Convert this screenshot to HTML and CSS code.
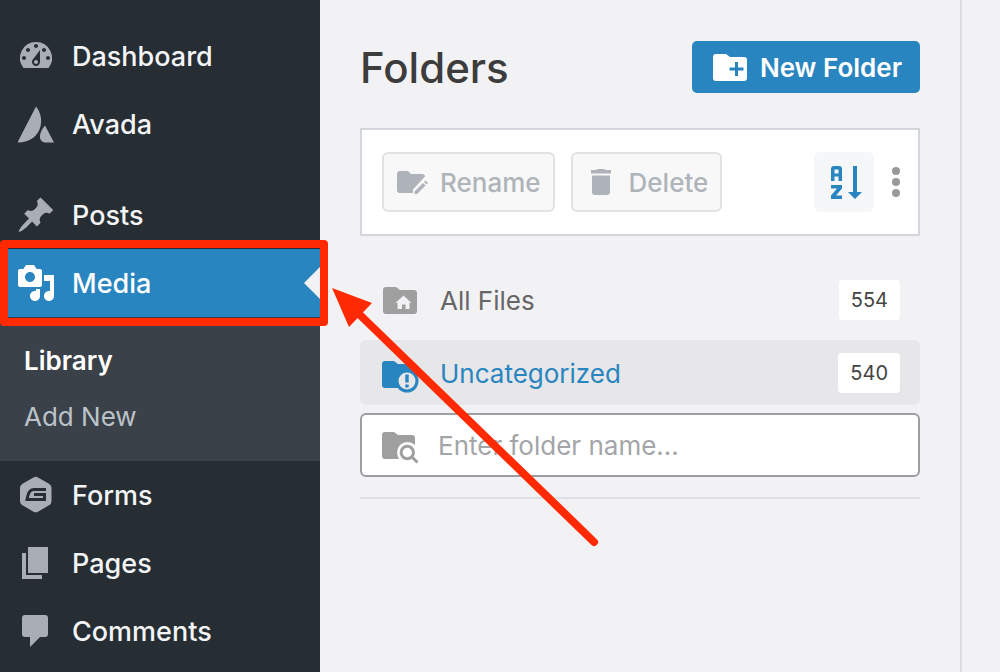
FILE: index.html
```html
<!DOCTYPE html>
<html lang="en">
<head>
<meta charset="utf-8">
<title>Media Library</title>
<link rel="stylesheet" href="styles.css">
</head>
<body>
<div class="app">
  <nav class="sidebar" aria-label="Admin menu">
    <ul class="menu">
      <li class="menu-item"><a class="menu-link" href="#dashboard">
        <svg class="icon" viewBox="0 0 20 20" aria-hidden="true"><path fill-rule="evenodd" d="M3.76 16h12.48A7.998 7.998 0 0 0 10 3a7.998 7.998 0 0 0-6.24 13zM10 4c.55 0 1 .45 1 1s-.45 1-1 1-1-.45-1-1 .45-1 1-1zM6 6c.55 0 1 .45 1 1s-.45 1-1 1-1-.45-1-1 .45-1 1-1zm8 0c.55 0 1 .45 1 1s-.45 1-1 1-1-.45-1-1 .45-1 1-1zm-5.37 5.55L12 7v6c0 1.1-.9 2-2 2s-2-.9-2-2c0-.57.24-1.08.63-1.45zM4 10c.55 0 1 .45 1 1s-.45 1-1 1-1-.45-1-1 .45-1 1-1zm12 0c.55 0 1 .45 1 1s-.45 1-1 1-1-.45-1-1 .45-1 1-1zm-5 3c0-.55-.45-1-1-1s-1 .45-1 1 .45 1 1 1 1-.45 1-1z"/></svg>
        <span class="label">Dashboard</span></a></li>
      <li class="menu-item"><a class="menu-link" href="#avada">
        <svg class="icon" viewBox="0 0 40 40" aria-hidden="true"><path d="M20 2.500C24.500 8 27 17 23.500 25.500C20 33.500 12 38.500 2.500 38.500Q1.500 38.500 2.200 37Z"/><path d="M29 21.500L38 38.500H28.500C25 37.500 23.500 35 24 31.500C24.500 28 26 25 29 21.500Z"/></svg>
        <span class="label">Avada</span></a></li>
      <li class="menu-gap" aria-hidden="true"></li>
      <li class="menu-item"><a class="menu-link" href="#posts">
        <svg class="icon" viewBox="0 0 20 20" aria-hidden="true"><path d="M10.440 3.020l1.820-1.820 6.360 6.350-1.830 1.820c-1.050-.68-2.480-.57-3.410.36l-.75.75c-.92.93-1.040 2.350-.35 3.410l-1.830 1.820-2.410-2.410-2.800 2.790c-.42.42-3.380 2.710-3.800 2.290s1.860-3.390 2.280-3.810l2.790-2.790L4.100 9.360l1.830-1.820c1.050.69 2.480.57 3.400-.36l.75-.75c.93-.92 1.050-2.350.36-3.410z"/></svg>
        <span class="label">Posts</span></a></li>
      <li class="menu-item current"><a class="menu-link" href="#media" aria-current="page">
        <svg class="icon" viewBox="0 0 20 20" aria-hidden="true"><path fill-rule="evenodd" d="M13 11V4c0-.55-.45-1-1-1h-1.670L9 1H5L3.670 3H2c-.55 0-1 .45-1 1v7c0 .55.45 1 1 1h10c.55 0 1-.45 1-1zM7 4.500c1.380 0 2.500 1.120 2.500 2.500S8.380 9.500 7 9.500 4.500 8.380 4.500 7 5.620 4.500 7 4.500zM14 6h5v10.500c0 1.380-1.120 2.500-2.500 2.500S14 17.880 14 16.500s1.120-2.500 2.500-2.500c.17 0 .34.02.5.05V9h-3V6zm-4 8.050V13h2v3.500c0 1.380-1.120 2.500-2.500 2.500S7 17.880 7 16.500 8.120 14 9.500 14c.17 0 .34.02.5.05z"/></svg>
        <span class="label">Media</span></a></li>
    </ul>
    <ul class="submenu">
      <li><a class="submenu-link active" href="#library">Library</a></li>
      <li><a class="submenu-link" href="#add-new">Add New</a></li>
    </ul>
    <ul class="menu">
      <li class="menu-item"><a class="menu-link" href="#forms">
        <svg class="icon" viewBox="0 0 40 40" aria-hidden="true"><path d="M17.500 2.500Q19.700 1.200 22 2.500L33 8.700Q35.500 10.200 35.500 12.800V26.200Q35.500 28.800 33 30.300L22 36.700Q19.700 38 17.500 36.700L6.500 30.300Q4 28.800 4 26.200V12.800Q4 10.200 6.500 8.700Z"/><path class="forms-mark" d="M30 14.500H17.500C13.500 14.500 12 18 11 24.500H28.500V19.500H18"/></svg>
        <span class="label">Forms</span></a></li>
      <li class="menu-item"><a class="menu-link" href="#pages">
        <svg class="icon" viewBox="0 0 20 20" aria-hidden="true"><path d="M6 15V2h10v13H6zm-1 1h8v2H3V5h2v11z"/></svg>
        <span class="label">Pages</span></a></li>
      <li class="menu-item"><a class="menu-link" href="#comments">
        <svg class="icon" viewBox="0 0 20 20" aria-hidden="true"><path d="M4.500 2h10A1.500 1.500 0 0 1 16 3.500v8a1.500 1.500 0 0 1-1.500 1.500H12l-5 5v-5H4.500A1.500 1.500 0 0 1 3 11.500v-8A1.500 1.500 0 0 1 4.500 2z"/></svg>
        <span class="label">Comments</span></a></li>
    </ul>
  </nav>

  <main class="panel">
    <header class="panel-head">
      <h1 class="title">Folders</h1>
      <button class="new-folder" type="button">
        <svg class="icon" viewBox="0 0 40 40" aria-hidden="true"><path d="M6 7H16L20 10H34Q37 10 37 13V31Q37 34 34 34H6Q3 34 3 31V10Q3 7 6 7Z"/><path class="plus" d="M26.500 15V29M19.500 22H33.500"/></svg>
        <span class="label">New Folder</span></button>
    </header>

    <div class="toolbar">
      <button class="tool" type="button" disabled>
        <svg class="icon-sm" viewBox="0 0 32 32" aria-hidden="true"><path d="M4 5H12L15 8H26Q29 8 29 10.500L17 23.500V27H4Q1 27 1 24V8Q1 5 4 5Z"/><path d="M18.500 25.500L27 17L29.500 19.500L21 28H18.500ZM28 16L29.500 14.500L32 17L30.500 18.500Z"/></svg>
        <span class="label">Rename</span></button>
      <button class="tool" type="button" disabled>
        <svg class="icon-sm" viewBox="0 0 32 32" aria-hidden="true"><path d="M6 4H11L13 3H19L21 4H26V7.500H6ZM7 9.500H25V26Q25 29 22 29H10Q7 29 7 26Z"/></svg>
        <span class="label">Delete</span></button>
      <button class="sort" type="button" aria-label="Sort folders">
        <svg class="sort-icon" viewBox="0 0 36 36" aria-hidden="true"><path fill-rule="evenodd" d="M5 17V5Q5 2 8 2H13Q16 2 16 5V17H12.500V12.500H8.500V17ZM8.500 5.500V9.500H12.500V5.500Z"/><path d="M5 21H16V24.500L10 31.500H16V35H5V31.500L11 24.500H5Z"/><path d="M27 2H31V28H36L29 35L22 28H27Z"/></svg>
      </button>
      <button class="more" type="button" aria-label="More options">
        <svg class="more-icon" viewBox="0 0 8 32" aria-hidden="true"><circle cx="4" cy="5" r="4"/><circle cx="4" cy="16" r="4"/><circle cx="4" cy="27" r="4"/></svg>
      </button>
    </div>

    <div class="folders">
      <a class="folder" href="#all">
        <svg class="icon" viewBox="0 0 40 40" aria-hidden="true"><path d="M6 7H16L20 10H34Q37 10 37 13V31Q37 34 34 34H6Q3 34 3 31V10Q3 7 6 7Z"/><path class="house" d="M23.500 15.500L31.500 23H29.500V29H25.500V24.500H22V29H17.500V23H15.500Z"/></svg>
        <span class="folder-name label">All Files</span><span class="count">554</span></a>
      <a class="folder selected" href="#uncategorized">
        <svg class="icon" viewBox="0 0 40 40" aria-hidden="true"><path d="M5 8H14L18 11H32Q35 11 35 14V32Q35 35 32 35H5Q2 35 2 32V11Q2 8 5 8Z"/><circle cx="27" cy="28" r="11.500"/><circle class="alert-face" cx="27" cy="28" r="8.500"/><path d="M25.300 21.500H28.700V29.500H25.300ZM25.300 31.500H28.700V34.500H25.300Z"/></svg>
        <span class="folder-name label">Uncategorized</span><span class="count">540</span></a>
      <label class="search">
        <svg class="icon" viewBox="0 0 40 40" aria-hidden="true"><path d="M5 7H14L18 10H32Q35 10 35 13V31Q35 34 32 34H5Q2 34 2 31V10Q2 7 5 7Z"/><circle class="lens-gap" cx="27.500" cy="27.500" r="10.500"/><path class="lens-gap" d="M34 25H40V34H34Z"/><path class="lens" d="M33.500 27.500A6.200 6.200 0 1 1 21.100 27.500A6.200 6.200 0 1 1 33.500 27.500M32 32L37.500 37.500"/></svg>
        <input class="search-input" type="text" placeholder="Enter folder name..." aria-label="Folder name">
      </label>
    </div>
    <hr class="rule">
  </main>
</div>
<svg class="arrow" viewBox="0 0 280 270" aria-hidden="true"><path class="arrow-line" d="M264 252L28 23"/><path d="M2 -2L42 13L19 37Z"/></svg>
</body>
</html>
```
FILE: styles.css
```css
* { box-sizing: border-box; }

body {
  margin: 0;
  position: relative;
  background: #f2f2f4;
  font-family: Inter, "Liberation Sans", sans-serif;
  font-size: 26px;
  line-height: 32px;
  color: #444;
}

ul { list-style: none; margin: 0; padding: 0; }
a { color: inherit; text-decoration: none; }
button { font: inherit; cursor: pointer; }

.app {
  display: grid;
  grid-template-columns: 320px 1fr 38px;
  min-height: 100vh;
}

.icon { width: 40px; height: 40px; flex: none; fill: currentColor; }
.label { padding-top: 2px; }

/* Sidebar */
.sidebar { background: #262e34; padding-top: 22px; }
.menu-link {
  display: flex;
  align-items: center;
  gap: 16px;
  height: 68px;
  padding: 0 16px;
  color: #f3f4f6;
  font-size: 27px;
  font-weight: 500;
}
.menu-link .icon { color: #a9aeb4; }
.menu-gap { height: 23px; }
.current { position: relative; background: #2985c0; }
.current .menu-link, .current .icon { color: #fff; }
.current::before {
  content: "";
  position: absolute;
  top: 18px;
  right: 0;
  border: 16px solid transparent;
  border-left: 0;
  border-right-color: #f2f2f4;
}
.current::after {
  content: "";
  position: absolute;
  inset: -9px -8px -9px 0;
  border: 8px solid #ff2a04;
  border-radius: 4px;
}
.forms-mark { fill: none; stroke: #262e34; stroke-width: 3; }
.submenu { background: #3b4148; padding: 16px 0; }
.submenu-link { display: block; padding: 12px 24px; color: #bcc3cb; }
.submenu-link.active { color: #fff; font-weight: 600; }

/* Folder panel */
.panel { padding: 40px 40px 40px 40px; border-right: 2px solid #dadde2; }
.panel-head { display: flex; justify-content: space-between; align-items: center; }
.title { margin: 0; font-size: 42px; line-height: 52px; font-weight: 500; color: #3c3c3c; padding-top: 2px; }
.new-folder {
  display: flex;
  align-items: center;
  gap: 10px;
  height: 52px;
  padding: 0 18px;
  border: 0;
  border-radius: 5px;
  background: #2985c0;
  color: #fff;
  font-weight: 600;
}
.plus { stroke: #2985c0; stroke-width: 3; }

.toolbar {
  display: flex;
  align-items: center;
  gap: 16px;
  margin-top: 34px;
  padding: 22px 18px 22px 20px;
  border: 2px solid #d3d7db;
  background: #fff;
}
.tool {
  display: flex;
  align-items: center;
  gap: 12px;
  height: 60px;
  padding: 0 12px;
  border: 2px solid #e1e2e3;
  border-radius: 6px;
  background: #f8f8f8;
  color: #aeb4b9;
  font-weight: 500;
}
.icon-sm { width: 32px; height: 32px; fill: #adb3b8; }
.sort {
  display: grid;
  place-items: center;
  width: 60px;
  height: 60px;
  margin-left: auto;
  padding: 0;
  border: 0;
  border-radius: 6px;
  background: #f5f7f9;
}
.sort-icon { width: 36px; height: 36px; fill: #2985c0; }
.more { display: flex; padding: 0 0 0 2px; border: 0; background: none; }
.more-icon { width: 8px; height: 32px; fill: #999; }

.folders { display: grid; gap: 8px; margin-top: 31px; }
.folder {
  display: flex;
  align-items: center;
  gap: 20px;
  height: 65px;
  padding: 0 20px;
  border-radius: 6px;
  color: #666;
}
.folder .icon { color: #9f9f9f; }
.folder-name { flex: 1; }
.house { fill: #f2f2f4; }
.selected { background: #e7e7e9; color: #2985c0; }
.selected .icon { color: #2985c0; }
.alert-face { fill: #e7e7e9; }
.count {
  padding: 4px 12px;
  border-radius: 4px;
  background: #fff;
  color: #444;
  font-size: 20px;
}
.search {
  display: flex;
  align-items: center;
  gap: 18px;
  height: 64px;
  padding: 0 18px;
  border: 2px solid #9b9fa2;
  border-radius: 6px;
  background: #fff;
}
.search .icon { color: #9f9f9f; }
.lens-gap { fill: #fff; }
.lens { fill: none; stroke: #9f9f9f; stroke-width: 3; }
.search-input {
  flex: 1;
  min-width: 0;
  padding: 2px 0 0;
  border: 0;
  outline: 0;
  background: none;
  font: inherit;
  color: #444;
}
.search-input::placeholder { color: #a3a5a8; opacity: 1; }
.rule { margin: 20px 0 0; border: 0; border-top: 2px solid #dde1e7; }

/* Pointer drawn over the page */
.arrow {
  position: absolute;
  left: 330px;
  top: 290px;
  width: 280px;
  height: 270px;
  overflow: visible;
  fill: #ff2a04;
  pointer-events: none;
}
.arrow-line { stroke: #ff2a04; stroke-width: 8; stroke-linecap: round; }
```
